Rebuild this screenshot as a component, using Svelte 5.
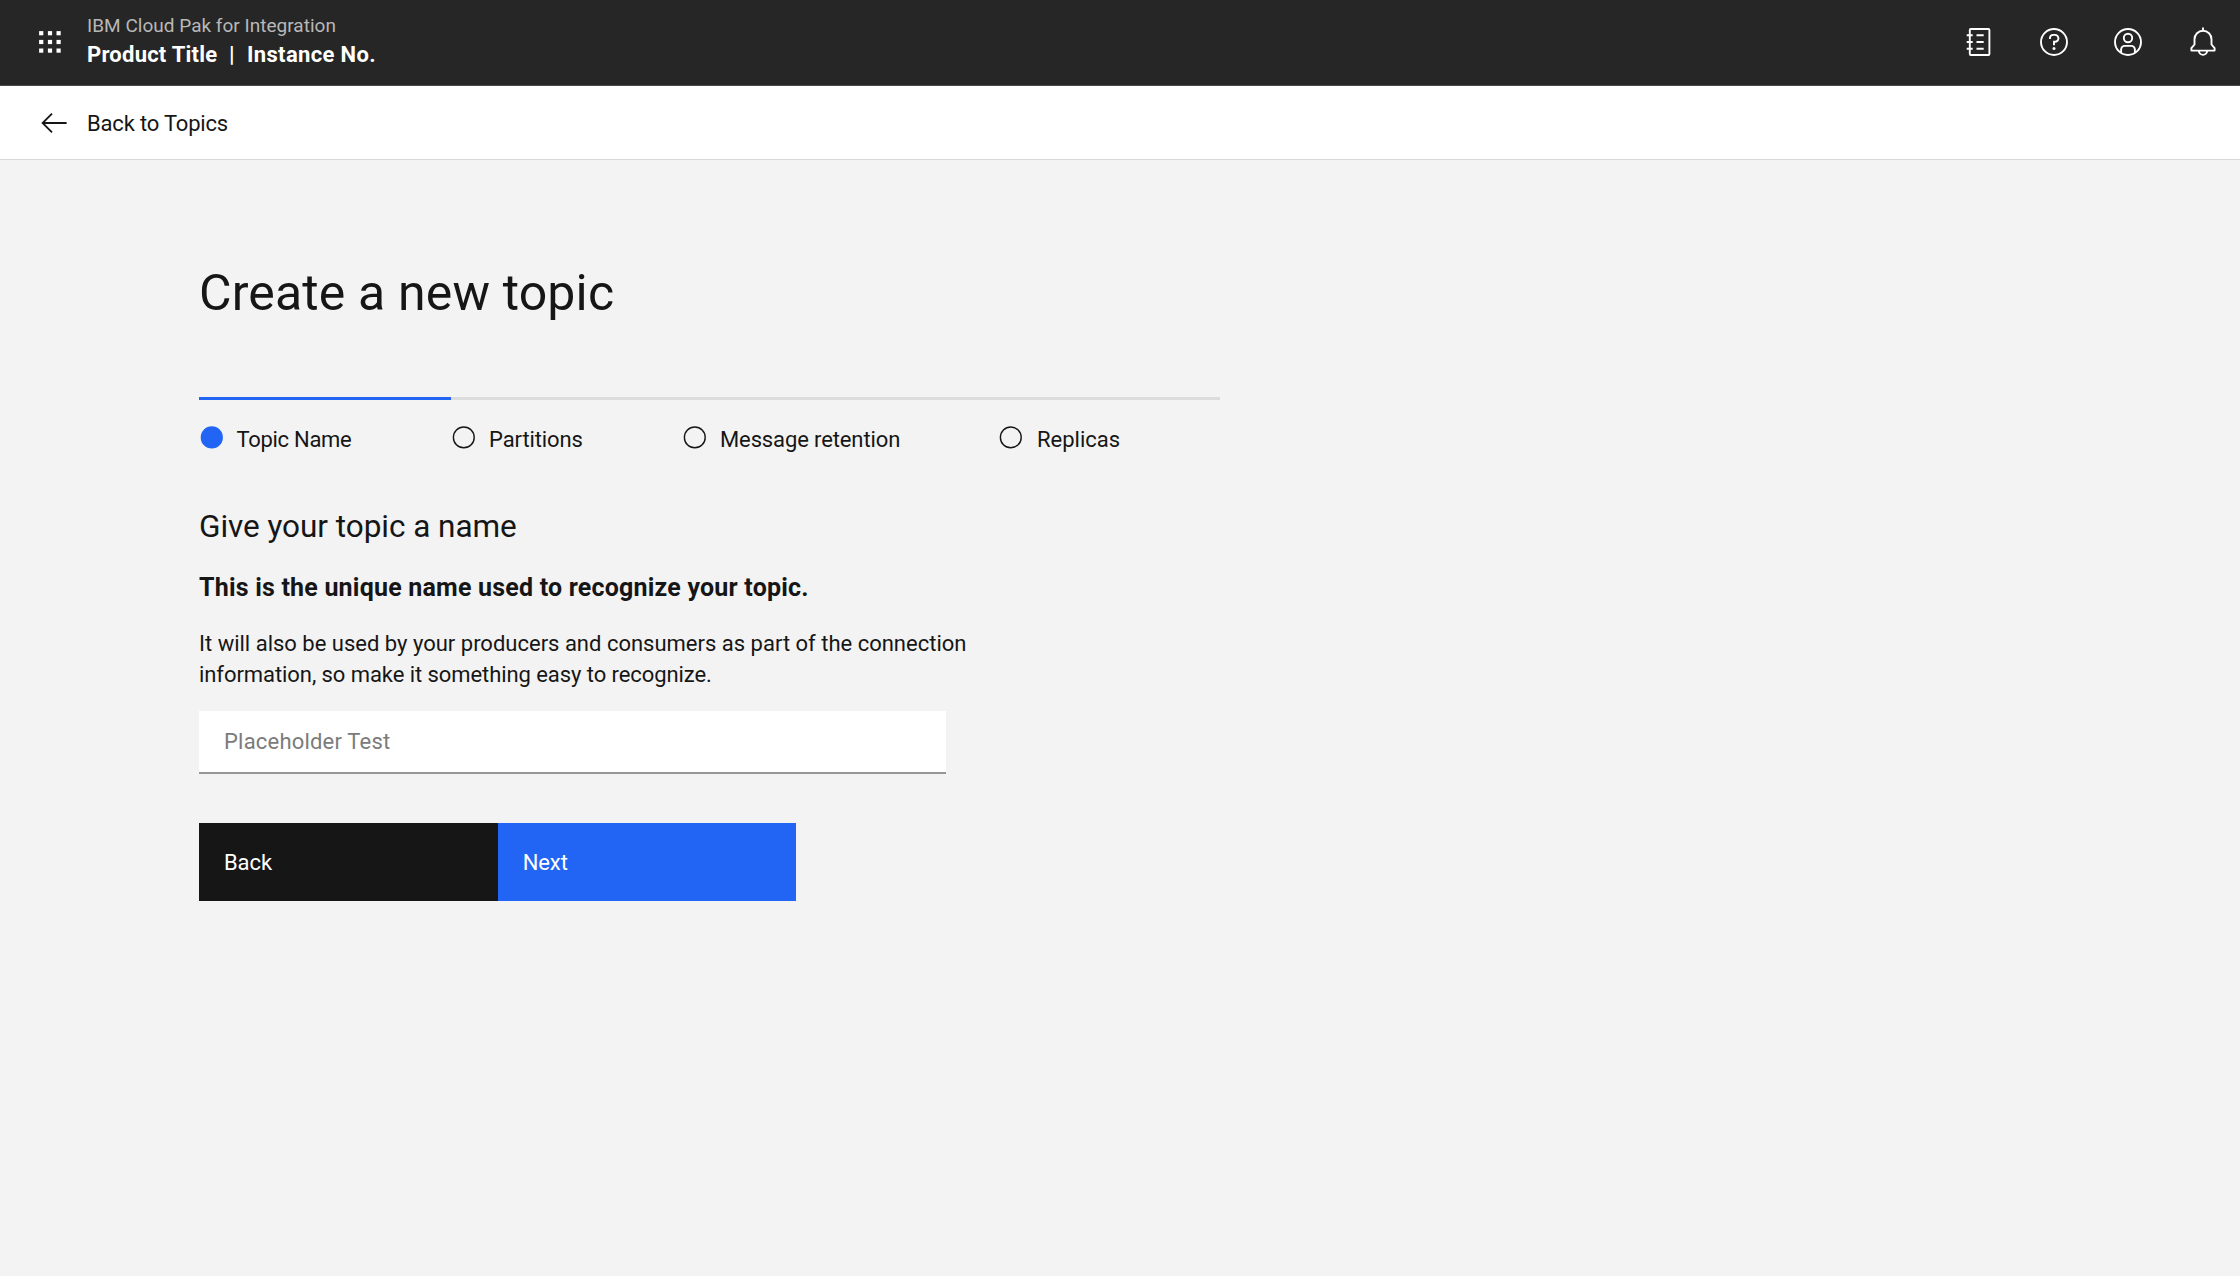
<script>
  const steps = [
    { label: 'Topic Name', kind: 'first' },
    { label: 'Partitions', kind: 'second' },
    { label: 'Message retention', kind: 'third' },
    { label: 'Replicas', kind: 'fourth' }
  ];
  let current = $state(0);
  let name = $state('');
  const dots = [2.2, 11, 19.6];
</script>

<header class="topbar">
  <button class="switcher" aria-label="Switcher">
    <svg width="22" height="22" viewBox="0 0 22 22" fill="#fff">
      {#each dots as y}
        {#each dots as x}
          <rect x={x - 2.1} y={y - 2.1} width="4.2" height="4.2" />
        {/each}
      {/each}
    </svg>
  </button>
  <div class="brand">
    <div class="suite">IBM Cloud Pak for Integration</div>
    <div class="product"><span class="title">Product Title</span><span class="bar">|</span><span class="instance">Instance No.</span></div>
  </div>
  <nav class="actions">
    <button aria-label="Notebook">
      <svg width="28" height="28" viewBox="0 0 28 28" fill="none" stroke="#fff" stroke-width="1.9">
        <rect x="4.8" y="1" width="19.6" height="26" rx="1" />
        <path d="M1.7 7.3h6M1.7 14h6M1.7 20.7h6M11.5 7.3h7.2M11.5 14h7.2M11.5 20.7h7.2" />
      </svg>
    </button>
    <button aria-label="Help">
      <svg width="28" height="28" viewBox="2 2 28 28" fill="#fff">
        <circle cx="16" cy="16" r="13" fill="none" stroke="#fff" stroke-width="1.9" />
        <circle cx="16" cy="22.6" r="1.5" />
        <path d="M11.9 13v-.7A3.5 3.5 0 0 1 15.4 8.9H17a3.45 3.45 0 0 1 0 6.9h-1v3.5" fill="none" stroke="#fff" stroke-width="1.9" />
      </svg>
    </button>
    <button aria-label="Account">
      <svg width="28" height="28" viewBox="2 2 28 28" fill="none" stroke="#fff" stroke-width="1.9">
        <circle cx="16" cy="16" r="13" />
        <circle cx="16" cy="12" r="4.2" />
        <path d="M9.1 26.8v-3a3.9 3.9 0 0 1 3.9-3.9h6a3.9 3.9 0 0 1 3.9 3.9v3" />
      </svg>
    </button>
    <button aria-label="Notifications">
      <svg width="28" height="30" viewBox="0 0 28 30" fill="none" stroke="#fff" stroke-width="1.9">
        <path d="M14 .6V4" />
        <path d="M14 3.8a8.5 8.5 0 0 0-8.5 8.5v5.2l-3.1 3.6v2.5h23.2v-2.5l-3.1-3.6v-5.2A8.5 8.5 0 0 0 14 3.8Z" stroke-linejoin="round" />
        <path d="M9.9 23.8a4.1 4.1 0 0 0 8.2 0" />
      </svg>
    </button>
  </nav>
</header>

<div class="backbar">
  <svg width="26" height="20" viewBox="0 0 26 20" fill="none" stroke="#161616" stroke-width="1.8">
    <path d="M1.6 10H25.6M11 .7 1.6 10 11 19.3" />
  </svg>
  <span>Back to Topics</span>
</div>

<main>
  <h1>Create a new topic</h1>

  <ol class="steps">
    {#each steps as step, i}
      <li class={step.kind} class:current={i === current}>
        <svg width="24" height="24" viewBox="0 0 24 24">
          <circle class="ring" cx="11.8" cy="12.4" r="10.4" />
        </svg>
        <span>{step.label}</span>
      </li>
    {/each}
  </ol>

  <h2>Give your topic a name</h2>
  <h3>This is the unique name used to recognize your topic.</h3>
  <p>
    <span>It will also be used by your producers and consumers as part of the connection</span>
    <br />
    <span class="tight">information, so make it something easy to recognize.</span>
  </p>
  <input type="text" placeholder="Placeholder Test" bind:value={name} />

  <div class="buttons">
    <button class="secondary">Back</button>
    <button class="primary">Next</button>
  </div>
</main>

<style>
  :global(body) {
    background: #f3f3f3;
    color: #161616;
    font-family: Roboto, 'Liberation Sans', sans-serif;
    font-size: 22px;
  }
  svg {
    display: block;
    flex: none;
  }
  button {
    border: 0;
    padding: 0;
    margin: 0;
    background: none;
    font: inherit;
    color: inherit;
    text-align: left;
  }
  .topbar {
    box-sizing: border-box;
    height: 86px;
    display: flex;
    background: #262626;
    border-bottom: 1px solid #4c4749;
    color: #fff;
  }
  .switcher {
    width: 87px;
    padding: 31px 0 0 39px;
    display: flex;
    align-items: flex-start;
  }
  .brand {
    padding-top: 13px;
    flex: 1;
  }
  .suite {
    font-size: 19px;
    line-height: 26px;
    color: #b8b8b8;
    letter-spacing: 0.02px;
  }
  .product {
    font-weight: 700;
    line-height: 32px;
    display: flex;
  }
  .title {
    letter-spacing: 0.23px;
    width: 142px;
  }
  .bar {
    width: 18px;
  }
  .instance {
    letter-spacing: 0.35px;
  }
  .actions {
    display: flex;
    gap: 46.7px;
    padding: 28px 23px 0 0;
    align-items: flex-start;
  }
  .actions button:last-child {
    margin-top: -1px;
  }
  .backbar {
    box-sizing: border-box;
    height: 74px;
    display: flex;
    align-items: center;
    gap: 20px;
    padding-left: 41px;
    background: #fff;
    border-bottom: 1px solid #d8d8d8;
  }
  .backbar span {
    letter-spacing: -0.18px;
    line-height: 30px;
    padding-top: 2px;
  }
  main {
    padding: 103px 0 0 199px;
  }
  h1,
  h2,
  h3,
  p {
    margin: 0;
    font-weight: 400;
  }
  h1 {
    font-size: 50px;
    line-height: 60px;
    letter-spacing: 0.15px;
  }
  .steps {
    list-style: none;
    margin: 74px 0 0;
    padding: 0;
    width: 1021px;
    display: grid;
    grid-template-columns: 252px 231px 316px 1fr;
  }
  .steps li {
    border-top: 3px solid #dcdcdc;
    padding-top: 25px;
    display: flex;
    gap: 13px;
    line-height: 30px;
  }
  .steps li svg {
    margin: 0 0 0 1px;
  }
  .steps .current {
    border-color: #2265f5;
  }
  .ring {
    fill: none;
    stroke: #161616;
    stroke-width: 1.4;
  }
  .current .ring {
    fill: #2265f5;
    stroke: #2265f5;
  }
  .steps .first {
    gap: 12.5px;
    letter-spacing: -0.3px;
  }
  .second {
    letter-spacing: -0.1px;
  }
  .third {
    letter-spacing: -0.12px;
  }
  .steps .fourth {
    gap: 14px;
  }
  h2 {
    margin-top: 52px;
    font-size: 31.5px;
    line-height: 40px;
    letter-spacing: -0.04px;
  }
  h3 {
    margin-top: 25px;
    font-size: 25px;
    font-weight: 700;
    line-height: 32px;
    letter-spacing: 0.2px;
  }
  p {
    margin-top: 24px;
    line-height: 31px;
    white-space: nowrap;
  }
  .tight {
    letter-spacing: -0.07px;
  }
  input {
    box-sizing: border-box;
    display: block;
    margin-top: 21px;
    width: 747px;
    height: 63px;
    padding: 0 25px;
    border: 0;
    border-bottom: 2px solid #969696;
    border-radius: 0;
    background: #fff;
    color: #161616;
    font: inherit;
    letter-spacing: 0.2px;
    outline: none;
  }
  input::placeholder {
    color: #7b7b7b;
    opacity: 1;
  }
  .buttons {
    margin-top: 49px;
    display: flex;
  }
  .buttons button {
    box-sizing: border-box;
    width: 298.7px;
    height: 78px;
    padding: 0 0 0 25px;
    color: #fff;
    letter-spacing: -0.1px;
  }
  .buttons .secondary {
    background: #161616;
  }
  .buttons .primary {
    background: #2265f5;
  }
</style>
